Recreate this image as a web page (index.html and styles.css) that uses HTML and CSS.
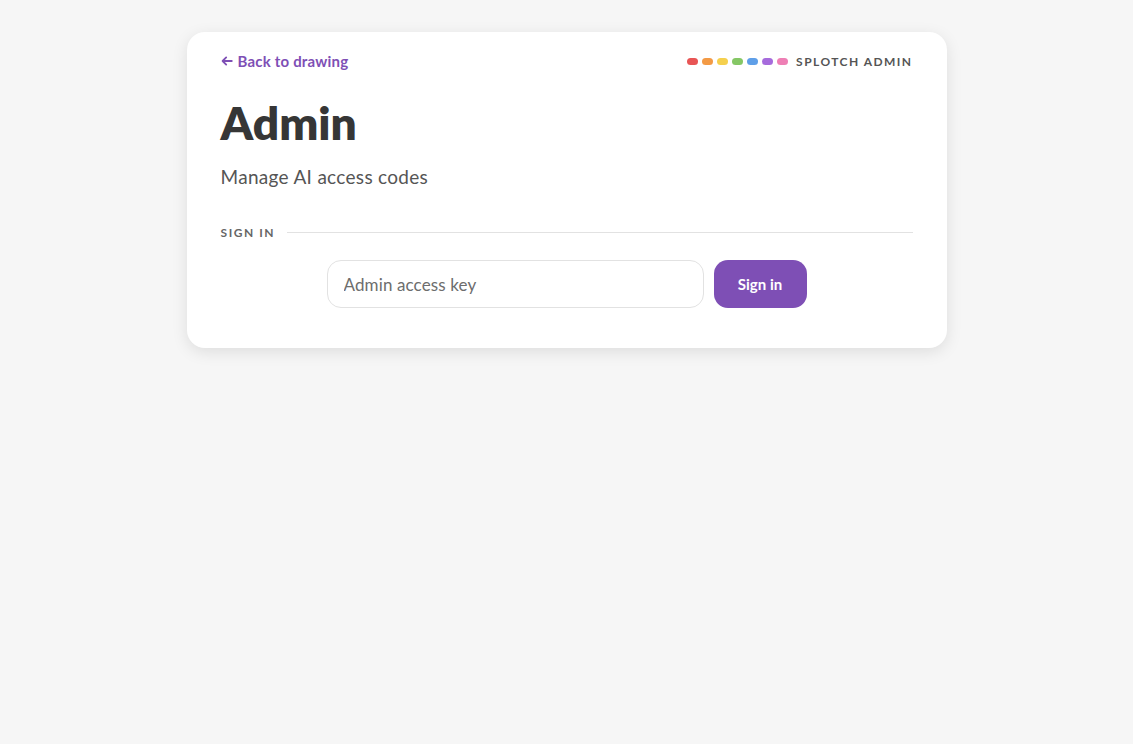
FILE: index.html
```html
<!DOCTYPE html>
<html lang="en">
<head>
<meta charset="utf-8">
<title>Admin</title>
<link rel="stylesheet" href="styles.css">
</head>
<body>
<main class="card">
  <header class="top">
    <a class="back" href="#"><svg class="arrow" viewBox="0 0 12 12" width="12" height="12" aria-hidden="true"><path d="M10.8 6H1.6M5.2 2.4 1.6 6l3.6 3.6"/></svg>Back to drawing</a>
    <div class="brand">
      <span class="dots">
        <i class="dot red"></i><i class="dot orange"></i><i class="dot yellow"></i><i class="dot green"></i><i class="dot blue"></i><i class="dot purple"></i><i class="dot pink"></i>
      </span>
      <span class="brand-name">SPLOTCH ADMIN</span>
    </div>
  </header>
  <h1>Admin</h1>
  <p class="sub">Manage AI access codes</p>
  <div class="section"><span>SIGN IN</span><hr></div>
  <form class="login">
    <input type="password" class="key" placeholder="Admin access key">
    <button type="button" class="go">Sign in</button>
  </form>
</main>
</body>
</html>
```
FILE: styles.css
```css
* { box-sizing: border-box; }
html, body { margin: 0; height: 100%; }
body {
  background: #f6f6f6;
  font-family: Lato, "Open Sans", sans-serif;
  color: #333;
  padding-top: 32px;
}
.card {
  width: 760px;
  height: 316px;
  margin: 0 auto;
  padding: 20px 34px 40px;
  background: #fff;
  border-radius: 18px;
  box-shadow: 0 4px 16px rgba(0, 0, 0, 0.1);
}
.top {
  display: flex;
  justify-content: space-between;
  align-items: center;
  height: 18px;
}
.back {
  display: flex;
  align-items: center;
  gap: 5px;
  color: #7e4fb5;
  font-size: 15px;
  font-weight: 700;
  letter-spacing: 0.2px;
  text-decoration: none;
}
.arrow { fill: none; stroke: #7e4fb5; stroke-width: 1.8; stroke-linecap: round; stroke-linejoin: round; }
.brand { display: flex; align-items: center; gap: 8px; }
.dots { display: flex; gap: 4px; }
.dot { display: block; width: 11px; height: 7px; border-radius: 4px; }
.red { background: #e85555; }
.orange { background: #f39a45; }
.yellow { background: #f5d04e; }
.green { background: #85c765; }
.blue { background: #5f9fe8; }
.purple { background: #a66bdc; }
.pink { background: #ee7fb5; }
.brand-name {
  font-size: 12px;
  font-weight: 700;
  letter-spacing: 1.45px;
  color: #555;
}
h1 {
  margin: 24px 0 0;
  font-size: 46px;
  line-height: 58px;
  font-weight: 800;
  color: #363636;
}
.sub {
  margin: 13px 0 0;
  font-size: 19px;
  line-height: 24px;
  letter-spacing: 0.3px;
  color: #555;
}
.section {
  display: flex;
  align-items: center;
  gap: 12px;
  margin-top: 35px;
  height: 16px;
}
.section span {
  font-size: 12px;
  font-weight: 700;
  letter-spacing: 1.55px;
  color: #666;
}
.section hr {
  flex: 1;
  margin: 0;
  border: 0;
  height: 1px;
  background: #e2e2e2;
}
.login {
  display: flex;
  justify-content: center;
  gap: 10px;
  margin-top: 20px;
}
.key {
  width: 377px;
  height: 48px;
  padding: 0 16px;
  border: 1px solid #e2e2e2;
  border-radius: 14px;
  background: #fff;
  font: 17px Lato, sans-serif;
  letter-spacing: 0.12px;
  outline: none;
}
.key::placeholder { color: #6d6d6d; opacity: 1; }
.go {
  width: 93px;
  height: 48px;
  border: 0;
  border-radius: 14px;
  background: #7e4fb5;
  color: #fff;
  font: 700 15px Lato, sans-serif;
}
```
